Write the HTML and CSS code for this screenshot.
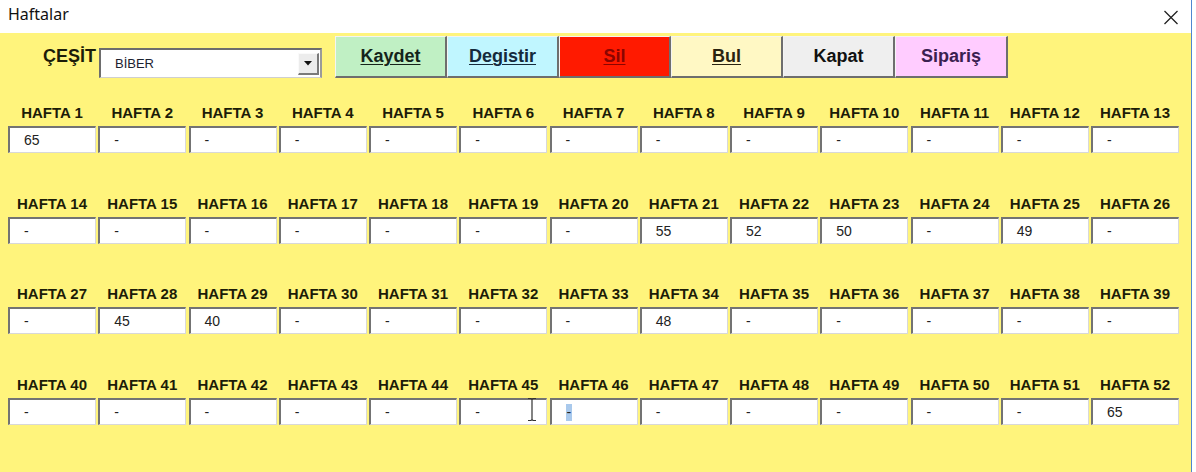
FILE: index.html
```html
<!DOCTYPE html>
<html lang="tr">
  <head>
    <meta charset="UTF-8" />
    <meta name="viewport" content="width=device-width, initial-scale=1.0" />
    <title>Haftalar</title>
    <link rel="stylesheet" href="styles.css">
  </head>
  <body>
    <div class="window">
      <!-- Title bar -->
      <div class="titlebar">
        <span class="title">Haftalar</span>
        <svg class="close" width="16" height="15" viewBox="0 0 16 15">
          <path d="M1.5 1 L14.5 14 M14.5 1 L1.5 14" stroke="#222" stroke-width="1.3" fill="none" />
        </svg>
      </div>

      <div class="form">
        <!-- Top row -->
        <div class="toolbar">
          <label class="cesit">ÇEŞİT</label>
          <div class="combo">
            <span class="combo-text">BİBER</span>
            <div class="drop">
              <svg width="8" height="5" viewBox="0 0 8 5"><path d="M0 0 H8 L4 4.5 Z" fill="#111" /></svg>
            </div>
          </div>
          <div class="buttons">
            <div class="btn btn-kaydet"><u>Kaydet</u></div>
            <div class="btn btn-degistir"><u>Degistir</u></div>
            <div class="btn btn-sil"><u>Sil</u></div>
            <div class="btn btn-bul"><u>Bul</u></div>
            <div class="btn btn-kapat">Kapat</div>
            <div class="btn btn-siparis">Sipariş</div>
          </div>
        </div>

        <!-- Weeks -->
        <div class="weeks" id="weeks"></div>

        <svg class="ibeam" width="12" height="25" viewBox="0 0 12 25">
          <path d="M2 1.5 H5 L6 2.5 L7 1.5 H10 M6 2.5 V22.5 M2 23.5 H5 L6 22.5 L7 23.5 H10" stroke="#333" stroke-width="1.2" fill="none" />
        </svg>
      </div>
    </div>

    <script>
      const values = {
        1: "65",
        21: "55",
        22: "52",
        23: "50",
        25: "49",
        28: "45",
        29: "40",
        34: "48",
        52: "65"
      };

      const weeks = document.getElementById("weeks");

      for (let i = 1; i <= 52; i++) {
        const cell = document.createElement("div");
        cell.className = "week";
        const value = values[i] || "-";
        let text = value;
        if (i === 46) {
          text = '<span class="sel">-</span>';
        }
        cell.innerHTML = `
          <div class="week-label">HAFTA ${i}</div>
          <div class="field">${text}</div>
        `;
        weeks.appendChild(cell);
      }
    </script>
  </body>
</html>
```

FILE: styles.css
```css
body {
  margin: 0;
  background-color: #fff;
  font-family: "Liberation Sans", Arial, sans-serif;
}
.window {
  position: relative;
  width: 1191px;
  height: 472px;
  border-right: 1px solid #4f86d0;
  display: flex;
  flex-direction: column;
}
.titlebar {
  height: 33px;
  box-sizing: border-box;
  background-color: #fff;
  display: flex;
  justify-content: space-between;
  align-items: flex-start;
  padding: 4px 12px 0 8px;
}
.title {
  font-family: "Noto Sans", sans-serif;
  font-size: 16px;
  line-height: 20px;
  color: #111;
}
.close {
  margin-top: 6px;
}
.form {
  flex: 1;
  background-color: #fff47c;
}
.toolbar {
  display: flex;
  align-items: flex-start;
  padding-top: 3px;
}
.cesit {
  margin-left: 43px;
  margin-top: 10px;
  width: 56px;
  font-size: 18px;
  line-height: 21px;
  font-weight: bold;
  color: #1c1c08;
}
.combo {
  margin-top: 12px;
  width: 223px;
  height: 30px;
  box-sizing: border-box;
  background-color: #fff;
  border-top: 2px solid #6d6d6d;
  border-left: 2px solid #6d6d6d;
  border-right: 2px solid #9a9a9a;
  border-bottom: 1px solid #cfcfcf;
  display: flex;
  align-items: center;
  justify-content: space-between;
  padding: 0 1px 0 14px;
}
.combo-text {
  font-size: 13px;
  color: #1c2230;
}
.drop {
  width: 21px;
  height: 22px;
  box-sizing: border-box;
  background-color: #ececec;
  border-top: 1px solid #fafafa;
  border-left: 1px solid #fafafa;
  border-right: 2px solid #7a7a7a;
  border-bottom: 2px solid #7a7a7a;
  display: flex;
  align-items: center;
  justify-content: center;
}
.buttons {
  display: flex;
  margin-left: 13px;
}
.btn {
  width: 112px;
  height: 42px;
  box-sizing: border-box;
  border-top: 1px solid #f4f4f4;
  border-left: 1px solid #f4f4f4;
  border-right: 2px solid #6e6e6e;
  border-bottom: 2px solid #6e6e6e;
  display: flex;
  align-items: center;
  justify-content: center;
  font-size: 18px;
  font-weight: bold;
  color: #111;
}
.btn u {
  text-decoration-thickness: 1px;
  text-underline-offset: 2px;
}
.btn-kaydet {
  background-color: #c0f0c4;
  color: #14241a;
}
.btn-degistir {
  background-color: #c0f6ff;
  color: #142a3c;
}
.btn-sil {
  background-color: #ff1a00;
  color: #8a0400;
}
.btn-bul {
  background-color: #fff8c4;
  color: #2a2410;
}
.btn-kapat {
  background-color: #efefef;
}
.btn-siparis {
  width: 113px;
  background-color: #ffccff;
  color: #3a2050;
}
.weeks {
  display: grid;
  grid-template-columns: repeat(13, 88px);
  column-gap: 2.25px;
  row-gap: 41.5px;
  padding-left: 8px;
  margin-top: 26px;
}
.week {
  display: flex;
  flex-direction: column;
}
.week-label {
  height: 17px;
  line-height: 17px;
  margin-bottom: 5px;
  text-align: center;
  white-space: nowrap;
  font-size: 15px;
  font-weight: bold;
  color: #1c1c08;
}
.field {
  height: 27px;
  box-sizing: border-box;
  background-color: #fff;
  border-top: 2px solid #737373;
  border-left: 2px solid #737373;
  border-right: 1px solid #d8d8d8;
  border-bottom: 1px solid #d8d8d8;
  padding-left: 14px;
  line-height: 24px;
  font-size: 14px;
  color: #222;
}
.sel {
  display: inline-block;
  line-height: 17px;
  padding: 0 1px;
  background-color: #a9c9ec;
}
.ibeam {
  position: absolute;
  left: 526px;
  top: 397px;
}
```
